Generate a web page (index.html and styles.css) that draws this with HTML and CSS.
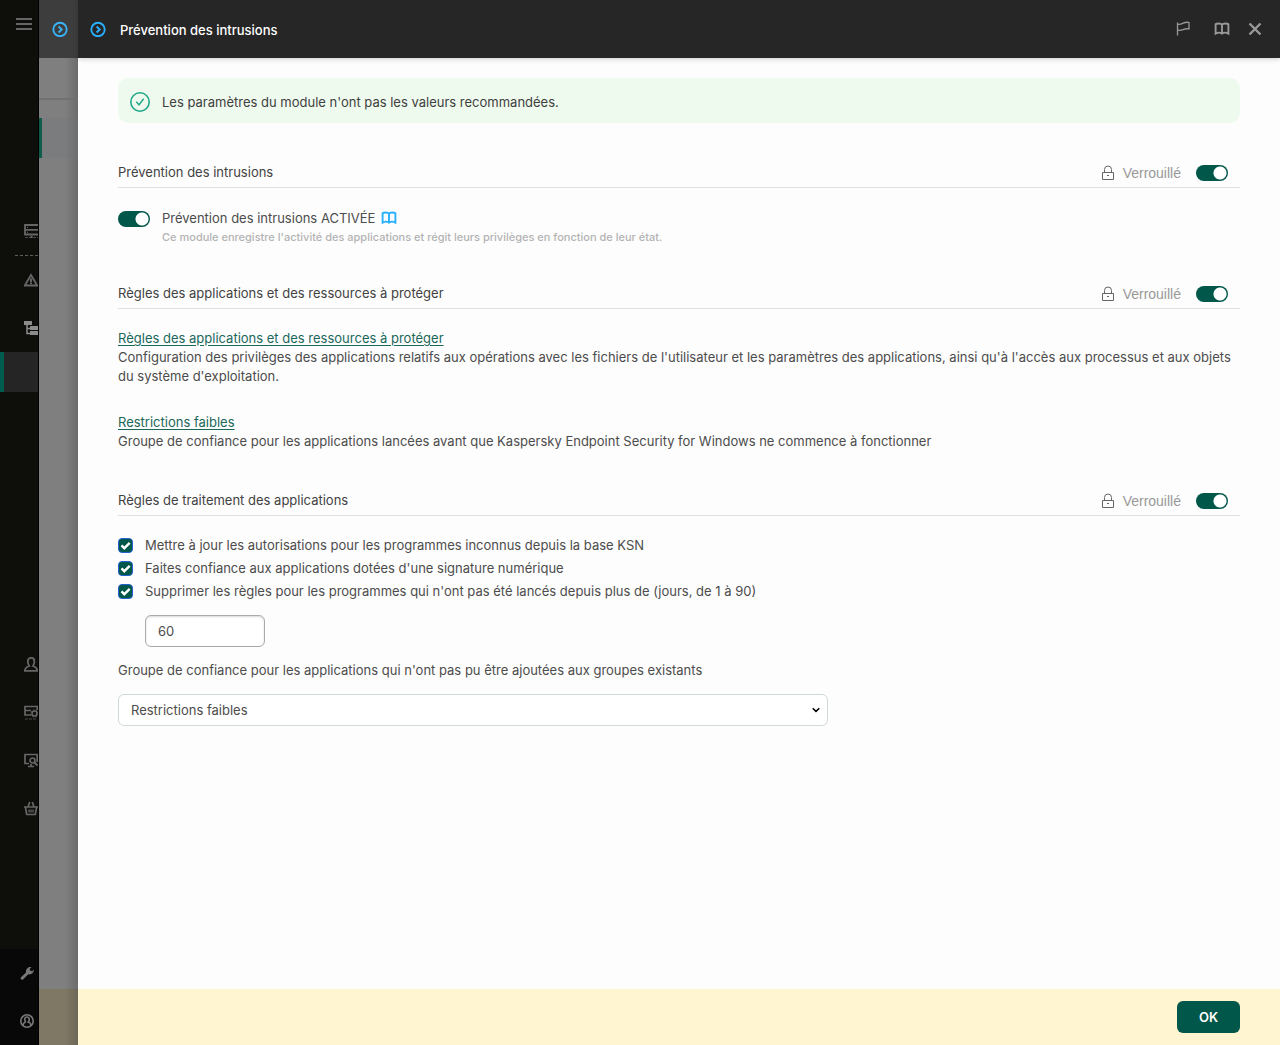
FILE: index.html
```html
<!DOCTYPE html>
<html lang="fr">
<head>
<meta charset="utf-8">
<title>Prévention des intrusions</title>
<meta name="viewport" content="width=device-width, initial-scale=1">
<link rel="stylesheet" href="styles.css">
</head>
<body>
<svg class="sprite" aria-hidden="true">
  <symbol id="arrow" viewBox="0 0 16 16"><circle cx="8" cy="8.500" r="6.700" fill="none" stroke="currentColor" stroke-width="1.900"/><path d="M6.600 5.500 9.700 8.500 6.600 11.500" fill="none" stroke="currentColor" stroke-width="1.900"/></symbol>
  <symbol id="book" viewBox="0 0 16 16"><path d="M1.600 12.600V3.200C2.500 2.400 7 2 8 3.700 9 2 13.500 2.400 14.400 3.200V12.600C12.500 11.600 9.500 11.600 8 12.600 6.500 11.600 3.500 11.600 1.600 12.600ZM8 3.700v9" fill="none" stroke="currentColor" stroke-width="1.900"/></symbol>
  <symbol id="lock" viewBox="0 0 14 16"><path d="M1.500 7.500h11v7h-11zM3.500 7.500V4.500a3.500 3.500 0 0 1 7 0v3M6 10.500h2" fill="none" stroke="currentColor"/></symbol>
</svg>
<div class="app">
  <nav class="nav" aria-label="Navigation">
    <button class="nav-menu" aria-label="Menu"><svg width="16" height="12" viewBox="0 0 16 12"><path d="M0 1h16M0 6h16M0 11h16" stroke="currentColor" stroke-width="2"/></svg></button>
    <div class="nav-group nav-main">
      <a class="nav-item server" href="#" aria-label="Serveur"><svg viewBox="0 0 15 15"><path d="M1 1h14v9.500H1zM1 5.800h14" fill="none" stroke="currentColor" stroke-width="1.800"/><path d="M3 3.500h1M3 8.300h1" stroke="currentColor"/><path d="M1 13.500h13" stroke="currentColor" stroke-dasharray="3 1" opacity=".7"/><path d="M6.500 13h2" stroke="currentColor" stroke-width="2"/></svg></a>
      <a class="nav-item" href="#" aria-label="Alertes"><svg viewBox="0 0 15 15"><path d="M7 2 13.200 12.500H.800z" fill="none" stroke="currentColor" stroke-width="1.800"/><path d="M7 5.500v3.500M7 9.600v1.600" stroke="currentColor" stroke-width="2"/></svg></a>
      <a class="nav-item bright" href="#" aria-label="Appareils"><svg viewBox="0 0 15 15"><path d="M0 0h8v4H0z" fill="currentColor"/><path d="M3 4v8.500H6M3 7.500H6" fill="none" stroke="currentColor" stroke-width="1.500"/><path d="M6 5h9v4H6zM6 10h9v4H6z" fill="currentColor"/></svg></a>
      <a class="nav-current" href="#" aria-label="Stratégies"></a>
    </div>
    <div class="nav-group nav-second">
      <a class="nav-item" href="#" aria-label="Utilisateurs"><svg viewBox="0 0 15 15"><path d="M5.300 9C4 7.300 3.700 5.500 3.900 4a3.200 3.200 0 0 1 6.400 0c.2 1.500-.1 3.300-1.400 5 3 1 4.300 2 4.300 4.800H.8C.8 11 2.300 10 5.300 9z" fill="none" stroke="currentColor" stroke-width="1.800"/></svg></a>
      <a class="nav-item" href="#" aria-label="Opérations"><svg viewBox="0 0 15 15"><path d="M13.200 5V1.500H1V10h6M1 5.500h6" fill="none" stroke="currentColor" stroke-width="1.700"/><circle cx="10.500" cy="8.500" r="2.500" fill="none" stroke="currentColor" stroke-width="1.500"/><circle cx="10.500" cy="8.500" r="3.600" fill="none" stroke="currentColor" stroke-dasharray="1.500 1.500"/><path d="M1 14h12" stroke="currentColor" stroke-dasharray="3 1" opacity=".7"/></svg></a>
      <a class="nav-item" href="#" aria-label="Découverte"><svg viewBox="0 0 15 15"><path d="M5 10.500H1v-9h12.200V9M4 13.500h6M7 11v2.500" fill="none" stroke="currentColor" stroke-width="1.700"/><circle cx="8.500" cy="7.500" r="2.500" fill="none" stroke="currentColor" stroke-width="1.700"/><path d="m10.500 9.500 3 3" stroke="currentColor" stroke-width="2"/></svg></a>
      <a class="nav-item" href="#" aria-label="Marketplace"><svg viewBox="0 0 15 15"><path d="M0 6h14M1.500 6.500l1.200 7h8.600l1.200-7M4 6l1.700-5M10 6 8.300 1" fill="none" stroke="currentColor" stroke-width="1.700"/><path d="M5 8.500v3M7 8.500v3M9 8.500v3" stroke="currentColor" stroke-width="1.300"/></svg></a>
    </div>
    <div class="nav-foot">
      <a class="nav-item" href="#" aria-label="Paramètres"><svg viewBox="0 0 15 15"><path d="M.800 11.500 6 6.500C5.500 3 8 .300 11.500 1L9.500 3.300l1 1.500 1.700.400L13.800 3.500c.200 3.300-2.300 5.300-5.500 4.800L3 13.500C1.800 14.500 0 13 .800 11.500z" fill="currentColor"/></svg></a>
      <a class="nav-item" href="#" aria-label="Compte"><svg viewBox="0 0 15 15"><circle cx="7" cy="7" r="6.200" fill="none" stroke="currentColor" stroke-width="1.600"/><path d="M5.800 8C4 6 4.500 3 7 3s3 3 1.200 5c2 .500 2.500 1.500 2.800 3M3 11c.300-1.500.800-2.500 2.800-3" fill="none" stroke="currentColor" stroke-width="1.600"/></svg></a>
    </div>
  </nav>
  <div class="under">
    <div class="under-head"><svg width="16" height="16"><use href="#arrow"/></svg></div>
    <div class="under-bar"></div>
    <div class="under-row"></div>
    <div class="under-foot"></div>
  </div>
  <section class="panel">
    <header class="panel-head">
      <svg class="blue" width="16" height="16"><use href="#arrow"/></svg>
      <h1>Prévention des intrusions</h1>
      <div class="tools">
        <button aria-label="Signaler"><svg width="16" height="16" viewBox="0 0 16 16"><path d="M2.500 14.500V1.500M2.500 3C6 5 9 0 14 1.500v6.500C9 6.500 6.500 11 3 9" fill="none" stroke="currentColor" stroke-width="1.300"/></svg></button>
        <button class="help" aria-label="Aide"><svg width="16" height="16"><use href="#book"/></svg></button>
        <button aria-label="Fermer"><svg width="16" height="16" viewBox="0 0 16 16"><path d="m2.500 2.500 11 11M13.500 2.500l-11 11" stroke="currentColor" stroke-width="2.400"/></svg></button>
      </div>
    </header>
    <main class="content">
      <div class="banner" role="status">
        <svg width="20" height="20" viewBox="0 0 20 20"><circle cx="10" cy="10" r="9.200" fill="none" stroke="currentColor" stroke-width="1.600"/><path d="m6.300 9.800 2.700 3 4.700-6" fill="none" stroke="currentColor" stroke-width="1.400"/></svg>
        <span>Les paramètres du module n'ont pas les valeurs recommandées.</span>
      </div>

      <section class="block">
        <div class="block-head">
          <h2>Prévention des intrusions</h2>
          <label class="lock"><svg width="14" height="16"><use href="#lock"/></svg><span>Verrouillé</span><input class="switch" type="checkbox" role="switch" checked></label>
        </div>
        <div class="module">
          <input class="switch" id="module" type="checkbox" role="switch" checked>
          <div>
            <div class="module-title"><label for="module">Prévention des intrusions ACTIVÉE</label><a class="blue" href="#" aria-label="Aide"><svg width="16" height="16"><use href="#book"/></svg></a></div>
            <p class="hint">Ce module enregistre l'activité des applications et régit leurs privilèges en fonction de leur état.</p>
          </div>
        </div>
      </section>

      <section class="block">
        <div class="block-head">
          <h2>Règles des applications et des ressources à protéger</h2>
          <label class="lock"><svg width="14" height="16"><use href="#lock"/></svg><span>Verrouillé</span><input class="switch" type="checkbox" role="switch" checked></label>
        </div>
        <div class="rules">
          <div><a href="#">Règles des applications et des ressources à protéger</a>
          <p>Configuration des privilèges des applications relatifs aux opérations avec les fichiers de l'utilisateur et les paramètres des applications, ainsi qu'à l'accès aux processus et aux objets du système d'exploitation.</p></div>
          <div><a href="#">Restrictions faibles</a>
          <p>Groupe de confiance pour les applications lancées avant que Kaspersky Endpoint Security for Windows ne commence à fonctionner</p></div>
        </div>
      </section>

      <section class="block">
        <div class="block-head">
          <h2>Règles de traitement des applications</h2>
          <label class="lock"><svg width="14" height="16"><use href="#lock"/></svg><span>Verrouillé</span><input class="switch" type="checkbox" role="switch" checked></label>
        </div>
        <div class="options">
          <label class="check"><input type="checkbox" checked><span>Mettre à jour les autorisations pour les programmes inconnus depuis la base KSN</span></label>
          <label class="check"><input type="checkbox" checked><span>Faites confiance aux applications dotées d'une signature numérique</span></label>
          <label class="check"><input type="checkbox" checked><span id="days">Supprimer les règles pour les programmes qui n'ont pas été lancés depuis plus de (jours, de 1 à 90)</span></label>
          <input class="number" type="text" value="60" inputmode="numeric" aria-labelledby="days">
          <label class="group-label" for="group">Groupe de confiance pour les applications qui n'ont pas pu être ajoutées aux groupes existants</label>
          <select id="group"><option>Restrictions faibles</option></select>
        </div>
      </section>
    </main>
    <footer class="panel-foot"><button class="ok">OK</button></footer>
  </section>
</div>
</body>
</html>
```
FILE: styles.css
```css
* { box-sizing: border-box; }
body {
  margin: 0;
  background: #fdfdfd;
  color: #4c4c4c;
  font: 400 13px/19px Inter, "Liberation Sans", sans-serif;
}
h1, h2, p { margin: 0; }
button { border: 0; padding: 0; background: none; color: inherit; font: inherit; cursor: pointer; }
svg { display: block; flex: none; }
.sprite { position: absolute; width: 0; height: 0; }
.blue { color: #29b0ff; }

.app { display: grid; grid-template-columns: 39px 39px minmax(0, 1fr); min-height: 100vh; }

/* Collapsed navigation */
.nav { display: flex; flex-direction: column; overflow: hidden; background: #0e0e0b; border-right: 1px solid #000; color: #666; }
.nav-menu { display: flex; align-items: center; height: 48px; padding-left: 16px; color: #666; }
.nav-main { margin-top: 159px; }
.nav-second { margin-top: 248px; }
.nav-item { display: flex; align-items: center; height: 48px; padding-left: 24px; color: inherit; }
.nav-item svg { width: 15px; height: 15px; }
.nav-item.bright { color: #8c8c8c; }
.nav-item.server { height: 49px; background: repeating-linear-gradient(90deg, #5c5c5c 0 3px, transparent 3px 5px) 15px 100% / 24px 1px no-repeat; }
.nav-current { display: block; height: 40px; background: #252525; border-left: 4px solid #005c4c; }
.nav-foot { margin-top: auto; background: #080808; color: #787878; }
.nav-foot .nav-item { padding-left: 20px; }

/* Dimmed panel underneath */
.under { display: flex; flex-direction: column; background: linear-gradient(90deg, transparent 26px, rgba(0, 0, 0, .15)) #7f7f7f; }
.under-head { display: flex; align-items: center; justify-content: center; height: 58px; padding-left: 2px; background: #3d3d3d; color: #38b3f5; }
.under-bar { height: 42px; border-bottom: 2px solid #707070; }
.under-row { height: 40px; margin-top: 18px; border-left: 3px solid #0f5c4b; background: rgba(110, 116, 125, .25); }
.under-foot { height: 56px; margin-top: auto; background: linear-gradient(90deg, transparent 26px, rgba(0, 0, 0, .15)) #7f7864; }

.panel { display: flex; flex-direction: column; }
.panel-head { display: flex; align-items: center; gap: 14px; height: 58px; padding: 0 17px 0 12px; background: #262626; box-shadow: 0 1px 5px rgba(0, 0, 0, .2); }
h1 { flex: 1; padding-top: 2px; color: #fff; font-size: 13px; line-height: 20px; font-weight: 500; }
.tools { display: flex; align-items: center; gap: 17px; color: #999; }
.tools .help { margin-left: 6px; }

.content { flex: 1; padding: 20px 40px; }
.banner { display: flex; align-items: center; gap: 12px; min-height: 45px; padding: 13px 12px 11px; border-radius: 10px; background: #effaee; color: #1fa78a; }
.banner span { padding-top: 2px; color: #404040; }

.block { margin-top: 35px; }
.block-head { display: flex; align-items: center; justify-content: space-between; height: 30px; padding-right: 12px; border-bottom: 1px solid #e0e0e0; }
h2 { font-size: 13px; line-height: 19px; padding-bottom: 1px; font-weight: 400; color: #424242; }
.lock { display: flex; align-items: center; gap: 8px; color: #999; font-family: "Liberation Sans", sans-serif; font-size: 14px; }
.lock span { padding-top: 2px; }
.lock svg { color: #666; }
.lock .switch { margin-left: 7px; }

.switch { appearance: none; flex: none; width: 32px; height: 16px; margin: 0; border-radius: 8px; background: radial-gradient(circle at 24px 8px, #fff 6px, #00574a 7px); }

.module { display: flex; gap: 12px; padding-top: 20px; }
.module > .switch { margin-top: 3px; }
.module-title { display: flex; align-items: center; gap: 6px; height: 20px; }
.hint { color: #b3b3b3; font-size: 11px; line-height: 19px; font-weight: 500; margin-bottom: -3px; }

.rules { display: grid; gap: 27px; padding-top: 20px; }
.rules a { color: #1a675b; text-underline-offset: 2px; }

.options { display: flex; flex-direction: column; align-items: flex-start; padding-top: 18px; }
.check { display: flex; align-items: center; gap: 12px; min-height: 23px; }
.check input { appearance: none; flex: none; width: 15px; height: 15px; margin: 0; border: 1px solid #2463d1; border-radius: 4px; background: #00574a url("data:image/svg+xml,%3Csvg xmlns='http://www.w3.org/2000/svg' viewBox='0 0 13 13'%3E%3Cpath d='M2.500 6.300 5.300 9.200 10.700 3.800' fill='none' stroke='white' stroke-width='2.400'/%3E%3C/svg%3E") center / 13px 13px; }
.number, select { height: 32px; border-radius: 6px; background-color: #fff; color: #4c4c4c; font: inherit; }
.number { width: 120px; margin: 12px 0 14px 27px; padding: 0 12px; border: 1px solid #aaa; box-shadow: inset 0 1px 2px rgba(0, 0, 0, .15); }
select { appearance: none; width: 100%; max-width: 710px; margin-top: 14px; padding: 0 30px 0 12px; border: 1px solid #d2d9dd; background: #fff url("data:image/svg+xml,%3Csvg xmlns='http://www.w3.org/2000/svg' viewBox='0 0 8 6'%3E%3Cpath d='M.700 1.200 4 4.400 7.300 1.200' fill='none' stroke='black' stroke-width='1.500'/%3E%3C/svg%3E") right 7px center / 8px 6px no-repeat; }

.panel-foot { display: flex; align-items: center; justify-content: flex-end; height: 56px; padding: 0 40px; background: #fff5d0; }
.ok { width: 63px; height: 32px; border-radius: 6px; background: #00574a; color: #fff; font-weight: 600; }
```
